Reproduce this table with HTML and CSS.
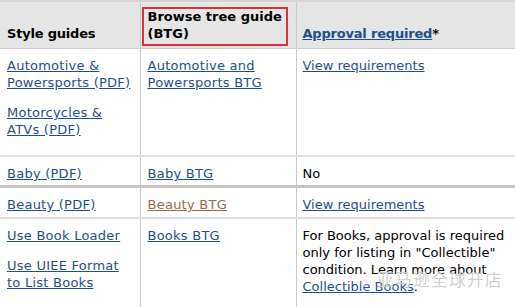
FILE: index.html
```html
<!DOCTYPE html>
<html lang="en">
<head>
  <meta charset="UTF-8" />
  <title>Category requirements</title>
  <link rel="stylesheet" href="styles.css">
</head>
<body>
  <div class="wrap">
    <table class="guides">
      <thead>
        <tr>
          <th class="c1">Style guides</th>
          <th class="c2"><span class="mark">Browse tree guide (BTG)</span></th>
          <th class="c3"><a href="#">Approval required</a>*</th>
        </tr>
      </thead>
      <tbody>
        <tr class="tall">
          <td>
            <p><a href="#">Automotive &amp; Powersports (PDF)</a></p>
            <p><a href="#">Motorcycles &amp; ATVs (PDF)</a></p>
          </td>
          <td><a href="#">Automotive and Powersports BTG</a></td>
          <td><a href="#">View requirements</a></td>
        </tr>
        <tr class="thick">
          <td><a href="#">Baby (PDF)</a></td>
          <td><a href="#">Baby BTG</a></td>
          <td>No</td>
        </tr>
        <tr>
          <td><a href="#">Beauty (PDF)</a></td>
          <td><a href="#" class="visited">Beauty BTG</a></td>
          <td><a href="#">View requirements</a></td>
        </tr>
        <tr>
          <td>
            <p><a href="#">Use Book Loader</a></p>
            <p><a href="#">Use UIEE Format to List Books</a></p>
          </td>
          <td><a href="#">Books BTG</a></td>
          <td>For Books, approval is required only for listing in "Collectible" condition. Learn more about <a href="#">Collectible Books</a>.</td>
        </tr>
      </tbody>
    </table>
    <div class="watermark"><span class="logo">&#9788;</span> 亚马逊全球开店</div>
  </div>
</body>
</html>
```

FILE: styles.css
```css
* {
  box-sizing: border-box;
}
body {
  margin: 0;
  background: #fff;
  font-family: "DejaVu Sans", Verdana, sans-serif;
  font-size: 13px;
  line-height: 17px;
  color: #000;
}
.wrap {
  position: relative;
  width: 515px;
  height: 307px;
  overflow: hidden;
}
a {
  color: #1f4e8c;
  text-decoration: underline;
}
a.visited {
  color: #9b6a45;
}
.guides {
  width: 540px;
  border-collapse: collapse;
  border-top: 2px solid #d4d4d4;
}
.guides th {
  background: #e5e5e5;
  text-align: left;
  vertical-align: bottom;
  font-weight: bold;
  letter-spacing: -0.2px;
  padding: 6px 7px 6px;
  border-bottom: 1px solid #cfcfcf;
  border-right: 1px solid #c8c8c8;
}
.guides th.c1 {
  width: 140px;
}
.guides th.c2 {
  width: 156px;
  position: relative;
  letter-spacing: 0;
}
.guides th.c3 {
  border-right: none;
  padding-left: 6px;
}
.guides th a {
  color: #1f4e8c;
}
.mark {
  display: block;
}
.guides th.c2::after {
  content: "";
  position: absolute;
  left: 1px;
  right: 8px;
  top: 5px;
  bottom: 2px;
  border: 2px solid #d7333b;
}
.guides td {
  vertical-align: top;
  letter-spacing: 0.25px;
  padding: 8px 7px 4px;
  border-bottom: 2px solid #dedede;
  border-right: 1px solid #c8c8c8;
}
.guides td:last-child {
  border-right: none;
  letter-spacing: 0;
  padding-left: 6px;
}
.guides tr.thick td {
  padding-bottom: 3px;
  border-bottom: 3px solid #c6c6c6;
}
.guides p {
  margin: 0 0 13px;
}
.watermark {
  position: absolute;
  left: 358px;
  top: 269px;
  font-family: "Noto Sans CJK SC", sans-serif;
  font-size: 17px;
  line-height: 20px;
  letter-spacing: 1px;
  color: rgba(175, 175, 175, 0.6);
  text-shadow: 0 0 1px #fff;
}
.logo {
  font-size: 14px;
}
```
